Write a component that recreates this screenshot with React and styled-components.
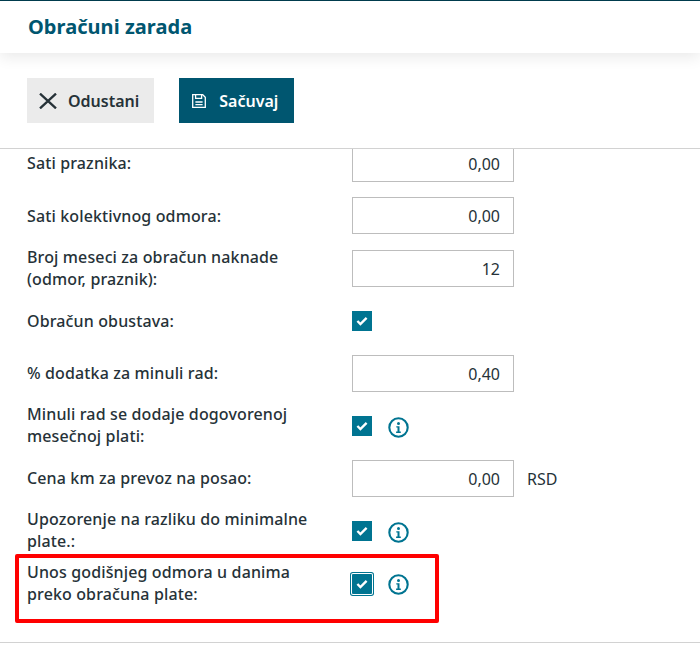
import styled, { createGlobalStyle } from 'styled-components'

const Global = createGlobalStyle`
html, body { margin:0; padding:0; background:#fff; }
body { font-family:"Noto Sans", sans-serif; color:#263238; }
`

const Page = styled.div`
position:relative;
width:700px;
height:653px;
overflow:hidden;
background:#fff;
`
const Header = styled.header`
position:relative;
z-index:1;
height:53px;
box-sizing:border-box;
border-top:1px solid #003b4d;
padding:0 28px;
display:flex;
align-items:center;
background:#fff;
box-shadow:0 4px 14px rgba(0,0,0,0.09);
`
const Title = styled.h1`
margin:0;
font-size:20px;
line-height:26px;
font-weight:700;
letter-spacing:.05px;
color:#005670;
`
const Toolbar = styled.div`
height:96px;
box-sizing:border-box;
padding:25px 27px 0;
display:flex;
gap:25px;
border-bottom:1px solid #d2d2d2;
`
const Button = styled.button`
height:45px;
box-sizing:border-box;
border:0;
padding:0 ${p => (p.$primary ? '16px' : '15px')} 0 12px;
display:flex;
align-items:center;
gap:${p => (p.$primary ? '12px' : '11px')};
font-family:inherit;
font-size:16px;
font-weight:600;
background:${p => (p.$primary ? '#005670' : '#ebebeb')};
color:${p => (p.$primary ? '#fff' : '#263238')};
`
const Form = styled.div`
height:494px;
overflow:hidden;
box-sizing:border-box;
border-bottom:1px solid #d2d2d2;
`
const Rows = styled.div`
margin-top:-4px;
padding-left:27px;
display:flex;
flex-direction:column;
`
const Row = styled.div`
display:flex;
align-items:center;
height:${p => p.$h}px;
`
const Label = styled.div`
width:325px;
box-sizing:border-box;
padding:${p => (p.$low ? '2px' : '0')} 22px 2px 0;
font-size:16px;
font-weight:500;
letter-spacing:.13px;
line-height:22px;
color:#263238;
`
const Input = styled.div`
width:162px;
height:37px;
box-sizing:border-box;
border:1px solid #bdbdbd;
padding:0 13px;
display:flex;
align-items:center;
justify-content:flex-end;
font-size:16px;
color:#263238;
`
const Unit = styled.span`
margin-left:13px;
font-size:16px;
color:#263238;
`
const Check = styled.span`
width:20px;
height:20px;
display:flex;
align-items:center;
justify-content:center;
background:#007491;
box-shadow:${p => (p.$focus ? '0 0 0 1px #fff, 0 0 0 2px #007491' : 'none')};
border-radius:${p => (p.$focus ? '1px' : '0')};
`
const InfoWrap = styled.span`
margin:${p => (p.$flat ? '0' : '2px')} 0 0 16px;
display:flex;
`
const Highlight = styled.div`
position:absolute;
left:15px;
top:554px;
width:424px;
height:69px;
box-sizing:border-box;
border:4px solid #f00;
border-radius:2px;
`

const CheckMark = () => (
    <svg width="12" height="10" viewBox="0 0 12 10" fill="none">
        <path d="M1.4 5 4.4 8 10.6 1.8" stroke="#fff" strokeWidth="2.4" />
    </svg>
)

const InfoIcon = () => (
    <svg width="21" height="21" viewBox="0 0 21 21" fill="none">
        <circle cx="10.5" cy="10.5" r="9.2" stroke="#007491" strokeWidth="2.1" />
        <circle cx="10.5" cy="6.4" r="1.5" fill="#007491" />
        <path d="M8.3 9.2h3.2v5.4h1.3v1.4H8.1v-1.4h1.4v-4H8.3z" fill="#007491" />
    </svg>
)

const CloseIcon = () => (
    <svg width="18" height="16" viewBox="0 0 18 16" fill="none" stroke="#263238" strokeWidth="2.3">
        <path d="M1 .6 17 15.4M17 .6 1 15.4" />
    </svg>
)

const SaveIcon = () => (
    <svg width="16" height="16" viewBox="0 0 16 16" fill="none" stroke="#fff" strokeWidth="1.3">
        <path d="M1.7 1.7h10l2.6 2.6v10H1.7z" />
        <path d="M4.6 1.7v3.6h6V1.7M4.4 9h7.2M4.4 11.6h7.2" />
    </svg>
)

const Tick = ({ focus }) => (
    <Check $focus={focus}><CheckMark /></Check>
)

const App = () => {
    return (
        <Page>
            <Global />
            <Header>
                <Title>Obračuni zarada</Title>
            </Header>
            <Toolbar>
                <Button>
                    <CloseIcon />
                    Odustani
                </Button>
                <Button $primary>
                    <SaveIcon />
                    Sačuvaj
                </Button>
            </Toolbar>
            <Form>
                <Rows>
                    <Row $h={37}>
                        <Label>Sati praznika:</Label>
                        <Input>0,00</Input>
                    </Row>
                    <Row $h={67}>
                        <Label $low>Sati kolektivnog odmora:</Label>
                        <Input>0,00</Input>
                    </Row>
                    <Row $h={39}>
                        <Label>Broj meseci za obračun naknade (odmor, praznik):</Label>
                        <Input>12</Input>
                    </Row>
                    <Row $h={66}>
                        <Label $low>Obračun obustava:</Label>
                        <Tick />
                    </Row>
                    <Row $h={39}>
                        <Label>% dodatka za minuli rad:</Label>
                        <Input>0,40</Input>
                    </Row>
                    <Row $h={66}>
                        <Label>Minuli rad se dodaje dogovorenoj mesečnoj plati:</Label>
                        <Tick />
                        <InfoWrap><InfoIcon /></InfoWrap>
                    </Row>
                    <Row $h={39}>
                        <Label>Cena km za prevoz na posao:</Label>
                        <Input>0,00</Input>
                        <Unit>RSD</Unit>
                    </Row>
                    <Row $h={66}>
                        <Label>Upozorenje na razliku do minimalne plate.:</Label>
                        <Tick />
                        <InfoWrap><InfoIcon /></InfoWrap>
                    </Row>
                    <Row $h={40}>
                        <Label>Unos godišnjeg odmora u danima preko obračuna plate:</Label>
                        <Tick focus />
                        <InfoWrap $flat><InfoIcon /></InfoWrap>
                    </Row>
                </Rows>
            </Form>
            <Highlight />
        </Page>
    )
}

export default App
